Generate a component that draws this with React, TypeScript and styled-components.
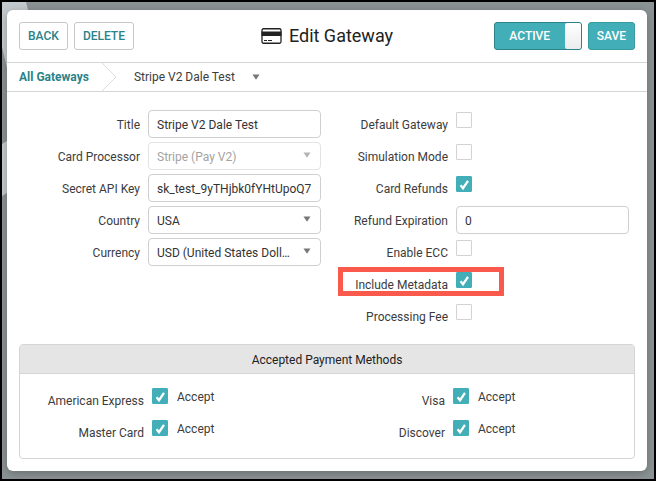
import React, { useId, useState } from "react";
import styled, { createGlobalStyle, css } from "styled-components";

const teal = "#42aeb8";
const tealDark = "#2b8289";
const line = "#d5d5d5";
const ink = "#3c3c3c";

const GlobalStyle = createGlobalStyle`
  *, *::before, *::after { box-sizing: border-box; }
  body {
    margin: 0;
    background: #000000;
    color: ${ink};
    font-family: Roboto, "Liberation Sans", sans-serif;
    font-size: 12px;
    line-height: 16px;
    -webkit-font-smoothing: antialiased;
  }
  button, input, select { font: inherit; color: inherit; }
`;

const Backdrop = styled.div`
  position: relative;
  min-height: 100vh;
  padding: 8px 7px 8px 5px;
  border: 2px solid #000000;
  background: #8b9294;
  overflow: hidden;
`;

const BackdropArt = styled.svg`
  position: absolute;
  top: 0;
  left: 0;
`;

const Panel = styled.main`
  position: relative;
  background: #ffffff;
  border-radius: 6px;
  box-shadow: 0 2px 8px rgba(0, 0, 0, 0.25);
`;

const Header = styled.header`
  display: grid;
  grid-template-columns: 1fr auto 1fr;
  align-items: center;
  padding: 12px;
  border-bottom: 1px solid ${line};
`;

const Actions = styled.div<{ $end?: boolean }>`
  display: flex;
  gap: 6px;
  justify-content: ${(p) => (p.$end ? "flex-end" : "flex-start")};
`;

const Button = styled.button<{ $primary?: boolean }>`
  height: 28px;
  padding: 0 8px;
  border: 1px solid #c4c8c9;
  border-radius: 3px;
  background: #ffffff;
  color: ${tealDark};
  font-weight: 500;
  cursor: pointer;
  ${(p) =>
    p.$primary &&
    css`
      border-color: #379aa3;
      background: ${teal};
      color: #ffffff;
    `}
`;

const Toggle = styled.button<{ $on: boolean }>`
  display: flex;
  flex-direction: ${(p) => (p.$on ? "row" : "row-reverse")};
  align-items: center;
  width: 88px;
  height: 28px;
  padding: 0;
  border: 1px solid ${tealDark};
  border-radius: 3px;
  background: ${(p) => (p.$on ? teal : "#9a9a9a")};
  color: #ffffff;
  font-weight: 500;
  cursor: pointer;
`;

const ToggleText = styled.span`
  flex: 1;
  text-align: center;
`;

const ToggleKnob = styled.span`
  width: 16px;
  height: 26px;
  border-radius: 2px;
  background: linear-gradient(#ffffff, #ececec);
`;

const Title = styled.h1`
  display: flex;
  align-items: center;
  gap: 7px;
  margin: 0;
  color: #222222;
  font-size: 18px;
  font-weight: 400;
  line-height: 24px;
`;

const Breadcrumb = styled.nav`
  display: flex;
  align-items: center;
  height: 29px;
  padding-left: 12px;
  border-bottom: 1px solid ${line};
`;

const CrumbLink = styled.a`
  color: ${tealDark};
  font-weight: 700;
  text-decoration: none;
`;

const CrumbArrow = styled.svg`
  margin: 0 16px 0 12px;
`;

const CrumbMenu = styled.button`
  display: flex;
  align-items: center;
  gap: 17px;
  padding: 0;
  border: 0;
  background: none;
  cursor: pointer;
`;

const Form = styled.form`
  display: grid;
  grid-template-columns: 1fr 1fr;
  padding: 18px 12px 14px;
`;

const Column = styled.div`
  display: flex;
  flex-direction: column;
  gap: 4px;
  min-width: 0;
`;

const Row = styled.div<{ $label: number }>`
  position: relative;
  display: grid;
  grid-template-columns: ${(p) => p.$label}px 1fr;
  gap: 8px;
  height: 28px;
  padding-right: 6px;
`;

const Label = styled.label`
  padding-top: 7px;
  text-align: right;
  white-space: nowrap;
`;

const fieldBox = css`
  width: 100%;
  min-width: 0;
  height: 28px;
  padding: 1px 8px 0;
  border: 1px solid #cfcfcf;
  border-radius: 4px;
  background: #ffffff;
  color: #333333;
  outline: none;
`;

const TextBox = styled.input`
  ${fieldBox}
`;

const SelectWrap = styled.div`
  position: relative;
  min-width: 0;
`;

const Select = styled.select`
  ${fieldBox}
  padding-right: 26px;
  appearance: none;
  text-overflow: ellipsis;
  white-space: nowrap;
  overflow: hidden;
  &:disabled {
    border-color: #e3e3e3;
    color: #a3a3a3;
    opacity: 1;
  }
`;

const SelectArrow = styled.svg`
  position: absolute;
  top: 10px;
  right: 10px;
  pointer-events: none;
`;

const CheckWrap = styled.span`
  position: relative;
  width: 16px;
  height: 16px;
  margin-top: 2px;
`;

const CheckInput = styled.input`
  display: block;
  width: 16px;
  height: 16px;
  margin: 0;
  appearance: none;
  border: 1px solid #d2d2d2;
  border-radius: 1px;
  background: #ffffff;
  &:checked {
    border-color: ${teal};
    background: ${teal};
  }
`;

const CheckMark = styled.svg`
  position: absolute;
  inset: 0;
  pointer-events: none;
`;

const Highlight = styled.span`
  position: absolute;
  top: -3px;
  left: 11px;
  width: 166px;
  height: 29px;
  border: 5px solid #fa5a4b;
  pointer-events: none;
`;

const Methods = styled.section`
  margin: 0 12px;
  border: 1px solid ${line};
  border-radius: 4px;
  overflow: hidden;
`;

const MethodsTitle = styled.h2`
  margin: 0;
  padding: 7px 0 5px;
  border-bottom: 1px solid ${line};
  background: #e5e5e5;
  color: #222222;
  font-size: 12px;
  font-weight: 400;
  line-height: 16px;
  text-align: center;
`;

const MethodsGrid = styled.div`
  display: grid;
  grid-template-columns: 1fr 1fr;
  gap: 4px 0;
  padding: 12px 6px;
`;

const AcceptCell = styled.div`
  display: flex;
  align-items: flex-start;
  gap: 9px;
`;

const AcceptText = styled.label`
  padding-top: 3px;
`;

const PanelFoot = styled.div`
  height: 12px;
`;

function Triangle({ color = "#777777" }: { color?: string }) {
  return (
    <svg width="8" height="6" viewBox="0 0 8 6" aria-hidden="true">
      <path d="M0.5 0.5h7L4 5.7z" fill={color} />
    </svg>
  );
}

function CardIcon() {
  return (
    <svg width="21" height="16" viewBox="0 0 21 16" aria-hidden="true">
      <rect x="1" y="0.75" width="19" height="14.5" rx="1.5" fill="#ffffff" stroke="#222222" strokeWidth="1.3" />
      <rect x="0.5" y="3.5" width="20" height="4.5" fill="#222222" />
      <path d="M3 12.5h3M7 12.5h4" stroke="#222222" strokeWidth="1.2" />
    </svg>
  );
}

function Check({ id, initial }: { id: string; initial: boolean }) {
  const [on, setOn] = useState(initial);
  return (
    <CheckWrap>
      <CheckInput id={id} type="checkbox" checked={on} onChange={(e) => setOn(e.target.checked)} />
      {on && (
        <CheckMark width="16" height="16" viewBox="0 0 16 16" aria-hidden="true">
          <path d="M4.6 9.2l2.4 3L12 4.8" fill="none" stroke="#ffffff" strokeWidth="2.3" />
        </CheckMark>
      )}
    </CheckWrap>
  );
}

function TextField({ label, value }: { label: string; value: string }) {
  const id = useId();
  return (
    <Row $label={121}>
      <Label htmlFor={id}>{label}</Label>
      <TextBox id={id} type="text" defaultValue={value} />
    </Row>
  );
}

function SelectField({ label, value, disabled }: { label: string; value: string; disabled?: boolean }) {
  const id = useId();
  return (
    <Row $label={121}>
      <Label htmlFor={id}>{label}</Label>
      <SelectWrap>
        <Select id={id} disabled={disabled}>
          <option>{value}</option>
        </Select>
        <SelectArrow width="8" height="6" viewBox="0 0 8 6" aria-hidden="true">
          <path d="M0.5 0.5h7L4 5.7z" fill={disabled ? "#b5b5b5" : "#777777"} />
        </SelectArrow>
      </SelectWrap>
    </Row>
  );
}

function CheckField({ label, on = false, highlighted }: { label: string; on?: boolean; highlighted?: boolean }) {
  const id = useId();
  return (
    <Row $label={121}>
      <Label htmlFor={id}>{label}</Label>
      <Check id={id} initial={on} />
      {highlighted && <Highlight />}
    </Row>
  );
}

function Method({ name }: { name: string }) {
  const id = useId();
  return (
    <Row $label={118}>
      <Label htmlFor={id}>{name}</Label>
      <AcceptCell>
        <Check id={id} initial />
        <AcceptText htmlFor={id}>Accept</AcceptText>
      </AcceptCell>
    </Row>
  );
}

export default function App() {
  const [active, setActive] = useState(true);
  return (
    <>
      <GlobalStyle />
      <Backdrop>
        <BackdropArt width="30" height="200" viewBox="0 0 30 200" aria-hidden="true">
          <path d="M0 0h24l3 12v20L6 70 0 45z" fill="#c3c9cc" />
          <path d="M0 142l8-5v52l-8 5z" fill="#c3c9cc" />
        </BackdropArt>
        <Panel>
          <Header>
            <Actions>
              <Button type="button">BACK</Button>
              <Button type="button">DELETE</Button>
            </Actions>
            <Title>
              <CardIcon />
              Edit Gateway
            </Title>
            <Actions $end>
              <Toggle type="button" role="switch" aria-checked={active} $on={active} onClick={() => setActive(!active)}>
                <ToggleText>ACTIVE</ToggleText>
                <ToggleKnob />
              </Toggle>
              <Button type="submit" form="gateway" $primary>
                SAVE
              </Button>
            </Actions>
          </Header>
          <Breadcrumb>
            <CrumbLink href="#gateways">All Gateways</CrumbLink>
            <CrumbArrow width="17" height="28" viewBox="0 0 17 28" aria-hidden="true">
              <path d="M1 0l14 14L1 28" fill="none" stroke="#dddddd" />
            </CrumbArrow>
            <CrumbMenu type="button">
              Stripe V2 Dale Test
              <Triangle />
            </CrumbMenu>
          </Breadcrumb>
          <Form id="gateway" onSubmit={(e) => e.preventDefault()}>
            <Column>
              <TextField label="Title" value="Stripe V2 Dale Test" />
              <SelectField label="Card Processor" value="Stripe (Pay V2)" disabled />
              <TextField label="Secret API Key" value="sk_test_9yTHjbk0fYHtUpoQ7" />
              <SelectField label="Country" value="USA" />
              <SelectField label="Currency" value="USD (United States Dollar)" />
            </Column>
            <Column>
              <CheckField label="Default Gateway" />
              <CheckField label="Simulation Mode" />
              <CheckField label="Card Refunds" on />
              <TextField label="Refund Expiration" value="0" />
              <CheckField label="Enable ECC" />
              <CheckField label="Include Metadata" on highlighted />
              <CheckField label="Processing Fee" />
            </Column>
          </Form>
          <Methods>
            <MethodsTitle>Accepted Payment Methods</MethodsTitle>
            <MethodsGrid>
              <Method name="American Express" />
              <Method name="Visa" />
              <Method name="Master Card" />
              <Method name="Discover" />
            </MethodsGrid>
          </Methods>
          <PanelFoot />
        </Panel>
      </Backdrop>
    </>
  );
}
